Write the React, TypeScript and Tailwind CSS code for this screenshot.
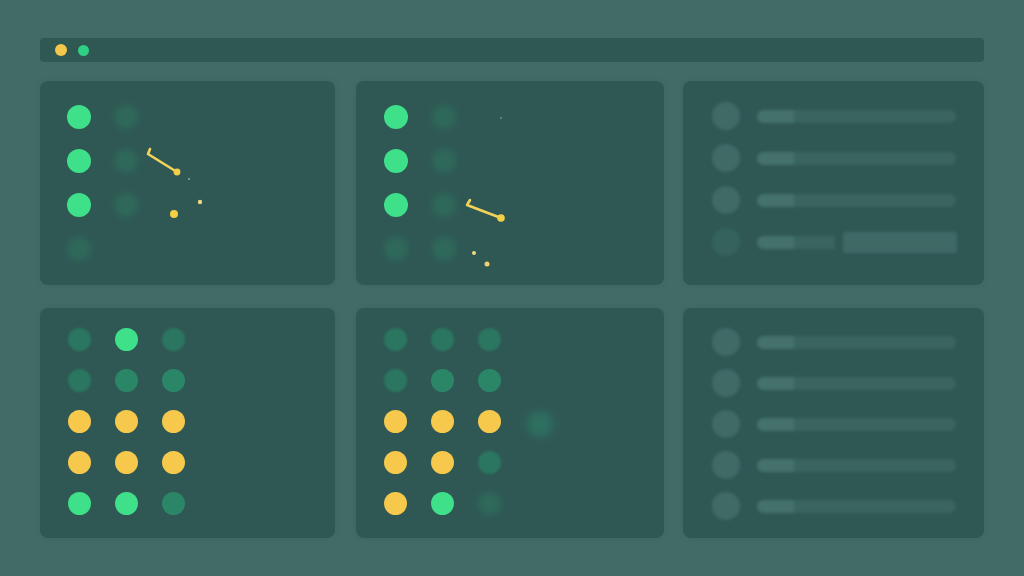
import React from "react";

type Tone = "green" | "yellow" | "mid" | "dim" | "faint";

const toneClass: Record<Tone, string> = {
  green: "bg-[#3fe08a]",
  yellow: "bg-[#f6c94c]",
  mid: "bg-[#2b8667] blur-[0.5px]",
  dim: "bg-[#2b7660] blur-[1px]",
  faint: "bg-[#2f6d5c] blur-[3px] opacity-80",
};

const Dot = ({ tone, size = "w-[24px] h-[24px]" }: { tone: Tone | null; size?: string }) => (
  <div className={`${size} rounded-full ${tone ? toneClass[tone] : ""}`} />
);

const Card = ({ className, children }: { className: string; children: React.ReactNode }) => (
  <div className={`rounded-[8px] bg-[#2f5854] shadow-[0_0_6px_rgba(0,0,0,0.08)] ${className}`}>{children}</div>
);

const DotColumn = ({ tones }: { tones: (Tone | null)[] }) => (
  <div className="flex flex-col gap-[20px]">
    {tones.map((t, i) => (
      <Dot key={i} tone={t} />
    ))}
  </div>
);

const DotGrid = ({ rows }: { rows: Tone[][] }) => (
  <div className="flex flex-col gap-[18px]">
    {rows.map((r, i) => (
      <div key={i} className="flex gap-[24px]">
        {r.map((t, j) => (
          <Dot key={j} tone={t} size="w-[23px] h-[23px]" />
        ))}
      </div>
    ))}
  </div>
);

type Row = { extra?: boolean; ghost?: boolean };

const ListCard = ({ rows, className, pt, gap }: { rows: Row[]; className: string; pt: string; gap: string }) => (
  <Card className={`${className} ${pt} pl-[29px]`}>
    <div className={`flex flex-col ${gap} blur-[1.5px]`}>
      {rows.map((r, i) => (
        <div key={i} className="flex items-center gap-[17px]">
          <div className={`w-[28px] h-[28px] rounded-full ${r.ghost ? "bg-[#35625d]" : "bg-[#3f6a66]"}`} />
          {r.extra ? (
            <div className="flex items-center">
              <div className="w-[37px] h-[13px] rounded-l-full bg-[#44716c]" />
              <div className="w-[41px] h-[13px] bg-[#3a6460]" />
              <div className="ml-[8px] w-[114px] h-[21px] rounded-[3px] bg-[#3e6965]" />
            </div>
          ) : (
            <div className="flex items-center">
              <div className="w-[37px] h-[13px] rounded-l-full bg-[#44716c]" />
              <div className="w-[162px] h-[13px] rounded-r-full bg-[#3a6460]" />
            </div>
          )}
        </div>
      ))}
    </div>
  </Card>
);

export default function App() {
  return (
    <div className="w-full h-[576px] bg-[#426b68] pt-[38px] px-[40px] overflow-hidden">
      <div className="h-[24px] w-[944px] rounded-[4px] bg-[#2f5853] flex items-center pl-[15px] gap-[11px]">
        <div className="w-[12px] h-[12px] rounded-full bg-[#f4c64a]" />
        <div className="w-[11px] h-[11px] rounded-full bg-[#2fcf85]" />
      </div>

      <div className="flex mt-[19px]">
        <Card className="w-[295px] h-[204px] flex pl-[27px] pt-[24px]">
          <DotColumn tones={["green", "green", "green", "faint"]} />
          <div className="ml-[23px]">
            <DotColumn tones={["faint", "faint", "faint", null]} />
          </div>
          <svg width="80" height="130" viewBox="0 0 80 130" className="ml-[2px]">
            <path d="M10 44 L8 49 L37 67" fill="none" stroke="#f3d35a" strokeWidth="2.6" strokeLinecap="round" strokeLinejoin="round" />
            <circle cx="37" cy="67" r="3.4" fill="#f3cf48" />
            <circle cx="49" cy="74" r="1" fill="#7fb0a6" />
            <circle cx="60" cy="97" r="2.2" fill="#ead97c" />
            <circle cx="34" cy="109" r="4" fill="#f5cf44" />
          </svg>
        </Card>

        <Card className="ml-[21px] w-[308px] h-[204px] flex pl-[28px] pt-[24px]">
          <DotColumn tones={["green", "green", "green", "faint"]} />
          <div className="ml-[24px]">
            <DotColumn tones={["faint", "faint", "faint", "faint"]} />
          </div>
          <svg width="80" height="170" viewBox="0 0 80 170" className="ml-[2px]">
            <circle cx="43" cy="13" r="0.8" fill="#8fb8ae" />
            <path d="M12 95 L9 100 L43 113" fill="none" stroke="#f3d35a" strokeWidth="2.6" strokeLinecap="round" strokeLinejoin="round" />
            <circle cx="43" cy="113" r="3.8" fill="#f3cf48" />
            <circle cx="16" cy="148" r="2" fill="#f0da80" />
            <circle cx="29" cy="159" r="2.5" fill="#f0d070" />
          </svg>
        </Card>

        <ListCard
          className="ml-[19px] w-[301px] h-[204px]"
          pt="pt-[21px]"
          gap="gap-[14px]"
          rows={[{}, {}, {}, { extra: true, ghost: true }]}
        />
      </div>

      <div className="flex mt-[23px]">
        <Card className="w-[295px] h-[230px] pl-[28px] pt-[20px]">
          <DotGrid
            rows={[
              ["dim", "green", "dim"],
              ["dim", "mid", "mid"],
              ["yellow", "yellow", "yellow"],
              ["yellow", "yellow", "yellow"],
              ["green", "green", "mid"],
            ]}
          />
        </Card>

        <Card className="ml-[21px] w-[308px] h-[230px] pl-[28px] pt-[20px] flex">
          <DotGrid
            rows={[
              ["dim", "dim", "dim"],
              ["dim", "mid", "mid"],
              ["yellow", "yellow", "yellow"],
              ["yellow", "yellow", "dim"],
              ["yellow", "green", "faint"],
            ]}
          />
          <div className="ml-[26px] mt-[83px] w-[26px] h-[26px] rounded-full bg-[#2e7060] blur-[4px]" />
        </Card>

        <ListCard
          className="ml-[19px] w-[301px] h-[230px]"
          pt="pt-[20px]"
          gap="gap-[13px]"
          rows={[{}, {}, {}, {}, {}]}
        />
      </div>
    </div>
  );
}
